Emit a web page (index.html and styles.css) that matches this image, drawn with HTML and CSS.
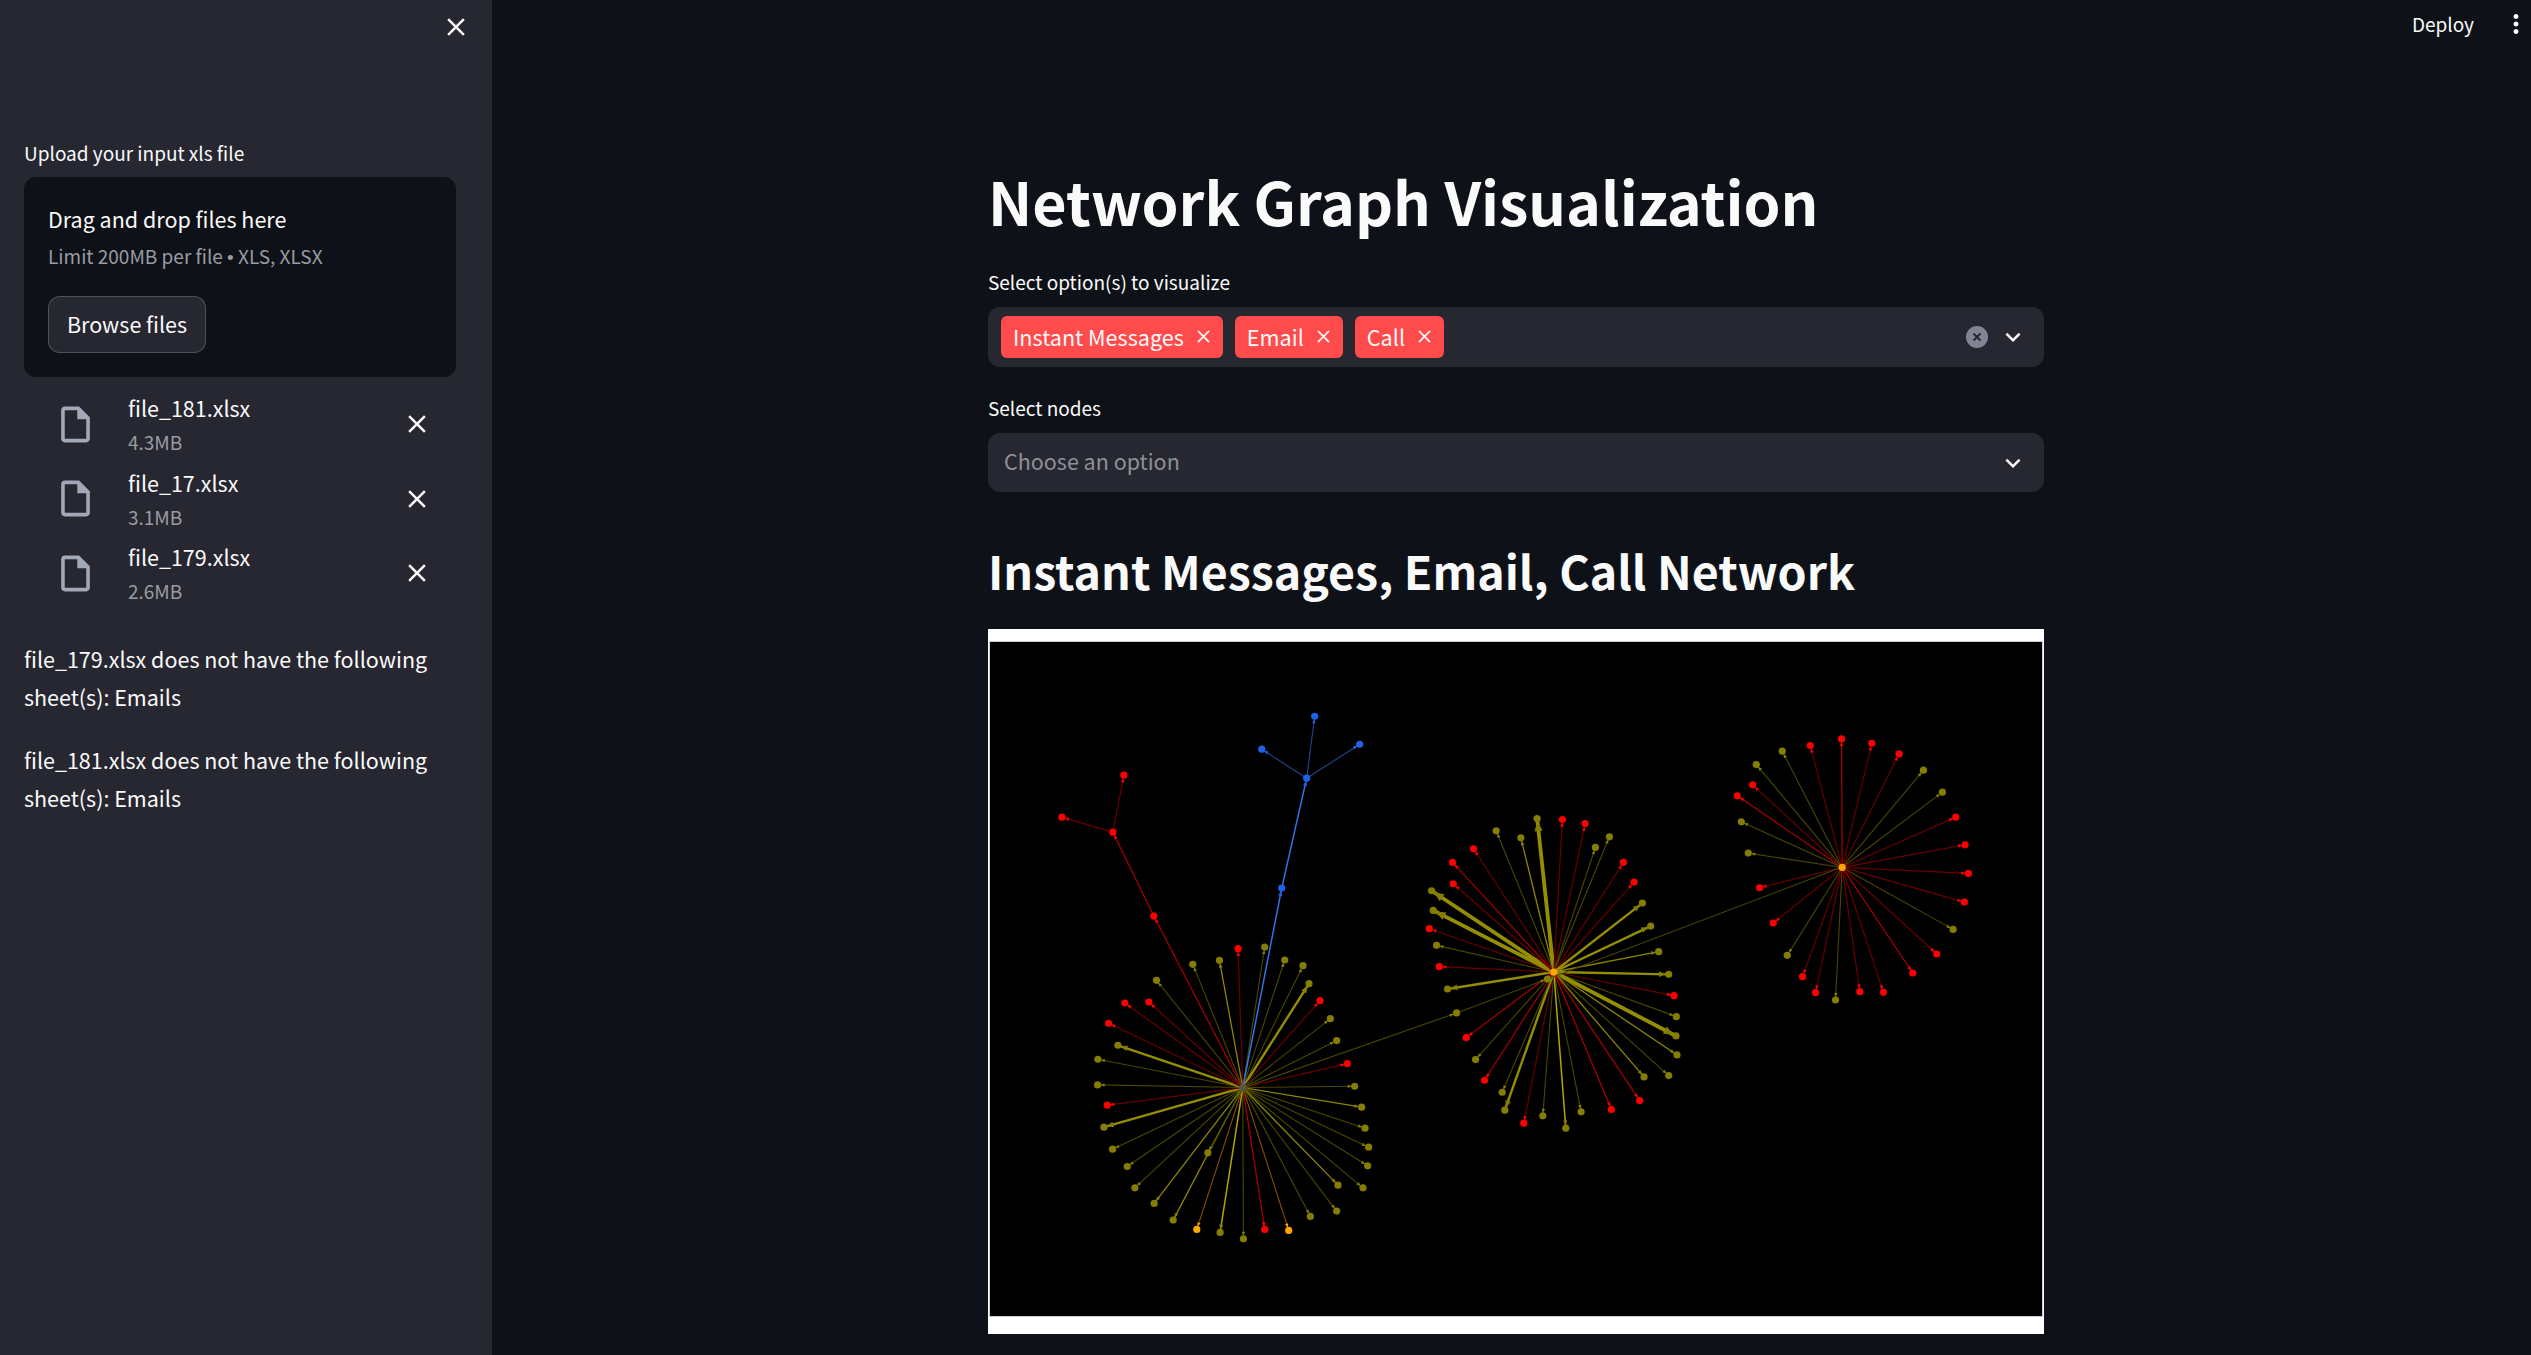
FILE: index.html
```html
<!DOCTYPE html>
<html lang="en">
<head>
    <meta charset="UTF-8">
    <meta name="viewport" content="width=device-width, initial-scale=1.0">
    <title>Network Graph Visualization</title>
    <link rel="stylesheet" href="styles.css">
</head>
<body>
    <div class="app">
        <aside class="sidebar">
            <div class="sidebar-top">
                <svg class="icon-close" viewBox="0 0 24 24"><path d="M19 6.41L17.59 5 12 10.59 6.41 5 5 6.41 10.59 12 5 17.59 6.41 19 12 13.41 17.59 19 19 17.59 13.41 12z"/></svg>
            </div>
            <label class="upload-label">Upload your input xls file</label>
            <div class="dropzone">
                <div class="drop-title">Drag and drop files here</div>
                <div class="drop-limit">Limit 200MB per file <span class="bullet">•</span> XLS, XLSX</div>
                <button class="browse-btn">Browse files</button>
            </div>
            <ul class="file-list">
                <li class="file-row">
                    <svg class="icon-file" viewBox="0 0 24 24"><path fill-rule="evenodd" d="M14 2H6c-1.1 0-2 .9-2 2v16c0 1.1.9 2 2 2h12c1.1 0 2-.9 2-2V8l-6-6zM6 20V4h7v5h5v11H6z"/></svg>
                    <div class="file-info">
                        <div class="file-name">file_181.xlsx</div>
                        <div class="file-size">4.3MB</div>
                    </div>
                    <svg class="icon-close" viewBox="0 0 24 24"><path d="M19 6.41L17.59 5 12 10.59 6.41 5 5 6.41 10.59 12 5 17.59 6.41 19 12 13.41 17.59 19 19 17.59 13.41 12z"/></svg>
                </li>
                <li class="file-row">
                    <svg class="icon-file" viewBox="0 0 24 24"><path fill-rule="evenodd" d="M14 2H6c-1.1 0-2 .9-2 2v16c0 1.1.9 2 2 2h12c1.1 0 2-.9 2-2V8l-6-6zM6 20V4h7v5h5v11H6z"/></svg>
                    <div class="file-info">
                        <div class="file-name">file_17.xlsx</div>
                        <div class="file-size">3.1MB</div>
                    </div>
                    <svg class="icon-close" viewBox="0 0 24 24"><path d="M19 6.41L17.59 5 12 10.59 6.41 5 5 6.41 10.59 12 5 17.59 6.41 19 12 13.41 17.59 19 19 17.59 13.41 12z"/></svg>
                </li>
                <li class="file-row">
                    <svg class="icon-file" viewBox="0 0 24 24"><path fill-rule="evenodd" d="M14 2H6c-1.1 0-2 .9-2 2v16c0 1.1.9 2 2 2h12c1.1 0 2-.9 2-2V8l-6-6zM6 20V4h7v5h5v11H6z"/></svg>
                    <div class="file-info">
                        <div class="file-name">file_179.xlsx</div>
                        <div class="file-size">2.6MB</div>
                    </div>
                    <svg class="icon-close" viewBox="0 0 24 24"><path d="M19 6.41L17.59 5 12 10.59 6.41 5 5 6.41 10.59 12 5 17.59 6.41 19 12 13.41 17.59 19 19 17.59 13.41 12z"/></svg>
                </li>
            </ul>
            <p class="sheet-note">file_179.xlsx does not have the following sheet(s): Emails</p>
            <p class="sheet-note">file_181.xlsx does not have the following sheet(s): Emails</p>
        </aside>

        <main class="main">
            <header class="topbar">
                <span class="deploy">Deploy</span>
                <svg class="icon-more" viewBox="0 0 24 24"><path d="M12 8c1.1 0 2-.9 2-2s-.9-2-2-2-2 .9-2 2 .9 2 2 2zm0 2c-1.1 0-2 .9-2 2s.9 2 2 2 2-.9 2-2-.9-2-2-2zm0 6c-1.1 0-2 .9-2 2s.9 2 2 2 2-.9 2-2-.9-2-2-2z"/></svg>
            </header>
            <div class="content">
                <h1>Network Graph Visualization</h1>
                <div class="field-label first">Select option(s) to visualize</div>
                <div class="select multi">
                    <div class="tags">
                        <span class="tag">Instant Messages<svg viewBox="0 0 24 24"><path d="M19 6.41L17.59 5 12 10.59 6.41 5 5 6.41 10.59 12 5 17.59 6.41 19 12 13.41 17.59 19 19 17.59 13.41 12z"/></svg></span>
                        <span class="tag">Email<svg viewBox="0 0 24 24"><path d="M19 6.41L17.59 5 12 10.59 6.41 5 5 6.41 10.59 12 5 17.59 6.41 19 12 13.41 17.59 19 19 17.59 13.41 12z"/></svg></span>
                        <span class="tag">Call<svg viewBox="0 0 24 24"><path d="M19 6.41L17.59 5 12 10.59 6.41 5 5 6.41 10.59 12 5 17.59 6.41 19 12 13.41 17.59 19 19 17.59 13.41 12z"/></svg></span>
                    </div>
                    <div class="select-actions">
                        <svg class="icon-clear" viewBox="0 0 22 22"><circle cx="11" cy="11" r="11"/><path d="M7.5 7.5l7 7M14.5 7.5l-7 7"/></svg>
                        <svg class="icon-chevron" viewBox="0 0 24 24"><path d="M16.59 8.59L12 13.17 7.41 8.59 6 10l6 6 6-6z"/></svg>
                    </div>
                </div>
                <div class="field-label">Select nodes</div>
                <div class="select single">
                    <span class="placeholder">Choose an option</span>
                    <div class="select-actions">
                        <svg class="icon-chevron" viewBox="0 0 24 24"><path d="M16.59 8.59L12 13.17 7.41 8.59 6 10l6 6 6-6z"/></svg>
                    </div>
                </div>
                <h2>Instant Messages, Email, Call Network</h2>
                <div class="plot-frame">
                    <svg id="graph" class="plot" viewBox="990 642 1053 674"></svg>
                </div>
            </div>
        </main>
    </div>
    <script src="graph.js"></script>
</body>
</html>
```

FILE: styles.css
```css
* {
    box-sizing: border-box;
}
html, body {
    height: 100%;
}
body {
    margin: 0;
    overflow: hidden;
    font-family: "Noto Sans CJK SC", "Noto Sans CJK JP", "Open Sans", sans-serif;
    color: #fafafa;
    background-color: #0e1117;
}
svg {
    display: block;
    flex: none;
}
.app {
    display: flex;
    height: 100%;
}

/* sidebar */
.sidebar {
    width: 492px;
    flex: none;
    padding: 0 24px;
    background-color: #262730;
}
.sidebar-top {
    height: 54px;
    display: flex;
    justify-content: flex-end;
    align-items: center;
}
.icon-close {
    width: 30px;
    height: 30px;
    fill: #fafafa;
}
.sidebar-top .icon-close {
    margin-right: -3px;
}
.upload-label {
    display: block;
    margin: 84px 0 9px;
    font-size: 19px;
    line-height: 30px;
}
.dropzone {
    width: 432px;
    height: 200px;
    padding: 27px 24px 0;
    border-radius: 12px;
    background-color: #0e1117;
}
.drop-title {
    font-size: 21.5px;
    line-height: 30px;
}
.drop-limit {
    margin-top: 9px;
    font-size: 19px;
    line-height: 26px;
    color: #9a9ba2;
}
.bullet {
    font-family: "Liberation Sans", sans-serif;
}
.browse-btn {
    display: block;
    margin-top: 25px;
    height: 57px;
    width: 158px;
    padding: 0 0 3px;
    border: 1px solid rgba(250,250,250,0.2);
    border-radius: 12px;
    font: inherit;
    font-size: 21.5px;
    color: #fafafa;
    background-color: #262730;
}
.file-list {
    list-style-type: none;
    margin: 10px 0 0;
    padding: 0;
}
.file-row {
    height: 74.5px;
    display: flex;
    align-items: center;
    padding-left: 30px;
}
.icon-file {
    width: 43px;
    height: 43px;
    fill: #a3a8b8;
}
.file-info {
    flex: 1;
    margin-left: 31px;
}
.file-name {
    font-size: 21.5px;
    line-height: 32px;
}
.file-size {
    margin-top: 4px;
    font-size: 19px;
    line-height: 28px;
    color: #9a9ba2;
}
.file-row .icon-close {
    margin-right: 36px;
}
.sheet-note {
    margin: 29px 0 0;
    font-size: 21.5px;
    line-height: 38px;
}
.sheet-note + .sheet-note {
    margin-top: 25px;
}

/* main area */
.main {
    flex: 1;
    min-width: 0;
    padding-left: 9px;
}
.topbar {
    height: 48px;
    display: flex;
    justify-content: flex-end;
    align-items: center;
}
.deploy {
    margin-right: 27px;
    margin-bottom: 1px;
    font-size: 19px;
}
.icon-more {
    width: 30px;
    height: 30px;
    fill: #fafafa;
}
.content {
    width: 1056px;
    margin: 0 auto;
}
h1 {
    margin: 112px 0 0;
    font-size: 59.2px;
    line-height: 80px;
    font-weight: 700;
}
h2 {
    margin: 43px 0 24px;
    font-size: 46.5px;
    line-height: 70px;
    font-weight: 600;
}
.field-label {
    margin: 26px 0 10px;
    font-size: 19px;
    line-height: 30px;
}
.field-label.first {
    margin-top: 27px;
}
.select {
    display: flex;
    justify-content: space-between;
    align-items: center;
    border-radius: 12px;
    background-color: #262730;
}
.select.multi {
    height: 60px;
    padding-left: 13px;
}
.select.single {
    height: 59px;
    padding-left: 16px;
}
.tags {
    display: flex;
    gap: 12px;
}
.tag {
    height: 42px;
    display: flex;
    align-items: center;
    gap: 9px;
    padding: 0 9px 2px 12px;
    border-radius: 6px;
    font-size: 21.6px;
    background-color: #ff4b4b;
}
.tag svg {
    width: 21px;
    height: 21px;
    fill: #fafafa;
}
.placeholder {
    margin-bottom: 5px;
    font-size: 21.5px;
    color: #8f9098;
}
.select-actions {
    display: flex;
    align-items: center;
    gap: 10px;
    padding-right: 16px;
}
.icon-clear {
    width: 22px;
    height: 22px;
}
.icon-clear circle {
    fill: #808495;
}
.icon-clear path {
    fill: none;
    stroke: #262730;
    stroke-width: 2;
}
.icon-chevron {
    width: 30px;
    height: 30px;
    fill: #fafafa;
}
.plot-frame {
    height: 705px;
    padding: 12px 1px 0 1px;
    background-color: #fff;
}
.plot {
    width: 1054px;
    height: 676px;
    border: 1px solid #ccc;
    background-color: #000;
}
```

FILE: graph.js
```js
const graph = document.getElementById('graph');

// Edge styles: stroke colour and width
const styles = {
    d: ['#4a4700', 1.1],    // dim olive
    m: ['#8c8500', 1.3],    // mid olive
    y: ['#b0a600', 1.5],    // bright thin olive
    t: ['#958e00', 2.4],    // thick olive
    w: ['#958e00', 3.8],    // widest olive
    r: ['#680000', 1.2],    // dark red
    s: ['#ad0000', 1.2],    // brighter red
    n: ['#8a5200', 1.1],    // orange
    b: ['#3273ea', 1.5],    // blue
    c: ['#1f4590', 1.1]     // dim blue
};
const fills = { o: '#857e00', r: '#ff0000', a: '#ffa500', b: '#1f62e8' };

// Spokes are [x, y, node colour, edge style], read from 3x crops of each cluster
const clusters = [
    {
        left: 1060, top: 920, hub: [549, 503], hubFill: '#55554a',
        spokes: [
            [535,86,'r','r'], [615,81,'o','d'], [675,120,'o','d'], [730,137,'o','d'], [748,191,'o','t'],
            [781,242,'r','r'], [812,296,'o','d'], [831,362,'o','d'], [863,431,'r','r'], [885,499,'o','d'],
            [906,562,'o','m'], [916,625,'o','d'], [927,682,'o','d'], [924,738,'o','d'], [910,804,'o','d'],
            [835,796,'o','m'], [831,874,'o','d'], [752,890,'o','d'], [687,932,'a','n'], [615,929,'r','s'],
            [551,957,'o','d'], [481,938,'o','y'], [411,929,'a','n'], [340,901,'o','m'], [283,851,'o','m'],
            [225,804,'o','d'], [202,740,'o','d'], [158,688,'o','d'], [132,622,'o','t'], [142,556,'r','r'],
            [113,495,'o','d'], [114,418,'o','d'], [174,376,'o','t'], [146,310,'r','r'], [195,249,'r','r'],
            [267,246,'r','r'], [290,181,'o','d'], [399,133,'o','d'], [479,121,'o','m']
        ]
    },
    {
        left: 1400, top: 790, hub: [463, 546], hubFill: '#ffa500',
        spokes: [
            [413,85,'o','w'], [489,88,'r','r'], [557,100,'r','r'], [630,140,'o','d'], [588,172,'o','d'],
            [672,217,'r','r'], [704,276,'r','r'], [729,339,'o','t'], [754,408,'o','t'], [778,485,'o','m'],
            [808,553,'o','t'], [824,617,'r','r'], [831,680,'o','d'], [830,738,'o','w'], [833,795,'o','m'],
            [808,857,'o','d'], [734,861,'o','m'], [721,932,'r','s'], [636,959,'r','s'], [545,966,'o','d'],
            [499,1015,'o','y'], [430,978,'o','d'], [373,1000,'r','r'], [316,961,'o','t'], [308,907,'o','d'],
            [255,871,'r','s'], [228,809,'o','d'], [200,743,'r','s'], [144,597,'o','t'], [119,530,'r','r'],
            [111,466,'o','d'], [89,416,'r','r'], [101,361,'o','w'], [96,302,'o','w'], [161,281,'r','r'],
            [159,217,'r','s'], [222,176,'r','r'], [290,122,'o','d'], [364,143,'o','m']
        ]
    },
    {
        left: 1700, top: 720, hub: [429, 442], hubFill: '#ffa500',
        spokes: [
            [427,56,'r','s'], [518,69,'r','r'], [600,101,'r','r'], [673,150,'o','d'], [730,216,'o','d'],
            [770,291,'r','r'], [798,374,'r','r'], [808,460,'r','r'], [796,546,'r','r'], [762,628,'o','d'],
            [713,702,'r','r'], [641,759,'r','s'], [553,817,'r','r'], [482,815,'r','r'], [409,840,'o','d'],
            [349,818,'r','r'], [310,770,'r','r'], [264,706,'o','d'], [222,609,'r','r'], [181,503,'r','r'],
            [147,399,'o','d'], [126,305,'o','d'], [114,227,'r','s'], [160,194,'r','r'], [171,133,'o','d'],
            [249,93,'o','d'], [333,76,'r','r']
        ]
    }
];

// Chains between and out of the clusters, in page coordinates
const chains = [
    { from: [1243,1088], to: [1208,1153], node: 'o', style: 'd' },
    { from: [1243,1088], to: [1154,916], node: 'r', style: 's' },
    { from: [1154,916], to: [1113,832], node: 'r', style: 's' },
    { from: [1113,832], to: [1062,817], node: 'r', style: 'r' },
    { from: [1113,832], to: [1124,775], node: 'r', style: 'r' },
    { from: [1243,1088], to: [1282,888], node: 'b', style: 'b' },
    { from: [1282,888], to: [1307,778], node: 'b', style: 'b' },
    { from: [1307,778], to: [1262,749], node: 'b', style: 'c' },
    { from: [1307,778], to: [1315,716], node: 'b', style: 'c' },
    { from: [1307,778], to: [1360,744], node: 'b', style: 'c' },
    { from: [1243,1088], to: [1457,1013], node: 'o', style: 'd' },
    { from: [1457,1013], to: [1548,979], node: 'o', style: 'd' },
    { from: [1548,979], to: [1843,867], node: null, style: 'd' }
];

function addShape(tag, attrs) {
    const el = document.createElementNS('http://www.w3.org/2000/svg', tag);
    Object.keys(attrs).forEach(key => el.setAttribute(key, attrs[key]));
    graph.appendChild(el);
}

const nodes = [];

function drawEdge(from, to, nodeColor, styleKey) {
    const [stroke, width] = styles[styleKey];
    addShape('line', { x1: from[0], y1: from[1], x2: to[0], y2: to[1], stroke: stroke, 'stroke-width': width });
    if (!nodeColor) return;

    // arrowhead sits just in front of the node
    const dx = to[0] - from[0];
    const dy = to[1] - from[1];
    const len = Math.hypot(dx, dy);
    const ux = dx / len;
    const uy = dy / len;
    const size = 1.2 + width * 1.5;
    const tipX = to[0] - ux * 3;
    const tipY = to[1] - uy * 3;
    const baseX = tipX - ux * size * 1.4;
    const baseY = tipY - uy * size * 1.4;
    const arrowFill = fills[nodeColor];
    const pts = [
        [tipX, tipY],
        [baseX - uy * size * 0.6, baseY + ux * size * 0.6],
        [baseX + uy * size * 0.6, baseY - ux * size * 0.6]
    ];
    addShape('polygon', { points: pts.map(p => p.join(',')).join(' '), fill: arrowFill });
    nodes.push({ x: to[0], y: to[1], fill: arrowFill });
}

clusters.forEach(cluster => {
    const toPage = p => [cluster.left + p[0] / 3, cluster.top + p[1] / 3];
    const hub = toPage(cluster.hub);
    cluster.spokes.forEach(s => drawEdge(hub, toPage(s), s[2], s[3]));
    nodes.push({ x: hub[0], y: hub[1], fill: cluster.hubFill });
});

chains.forEach(c => drawEdge(c.from, c.to, c.node, c.style));

nodes.forEach(n => addShape('circle', { cx: n.x, cy: n.y, r: 3.6, fill: n.fill }));
```
